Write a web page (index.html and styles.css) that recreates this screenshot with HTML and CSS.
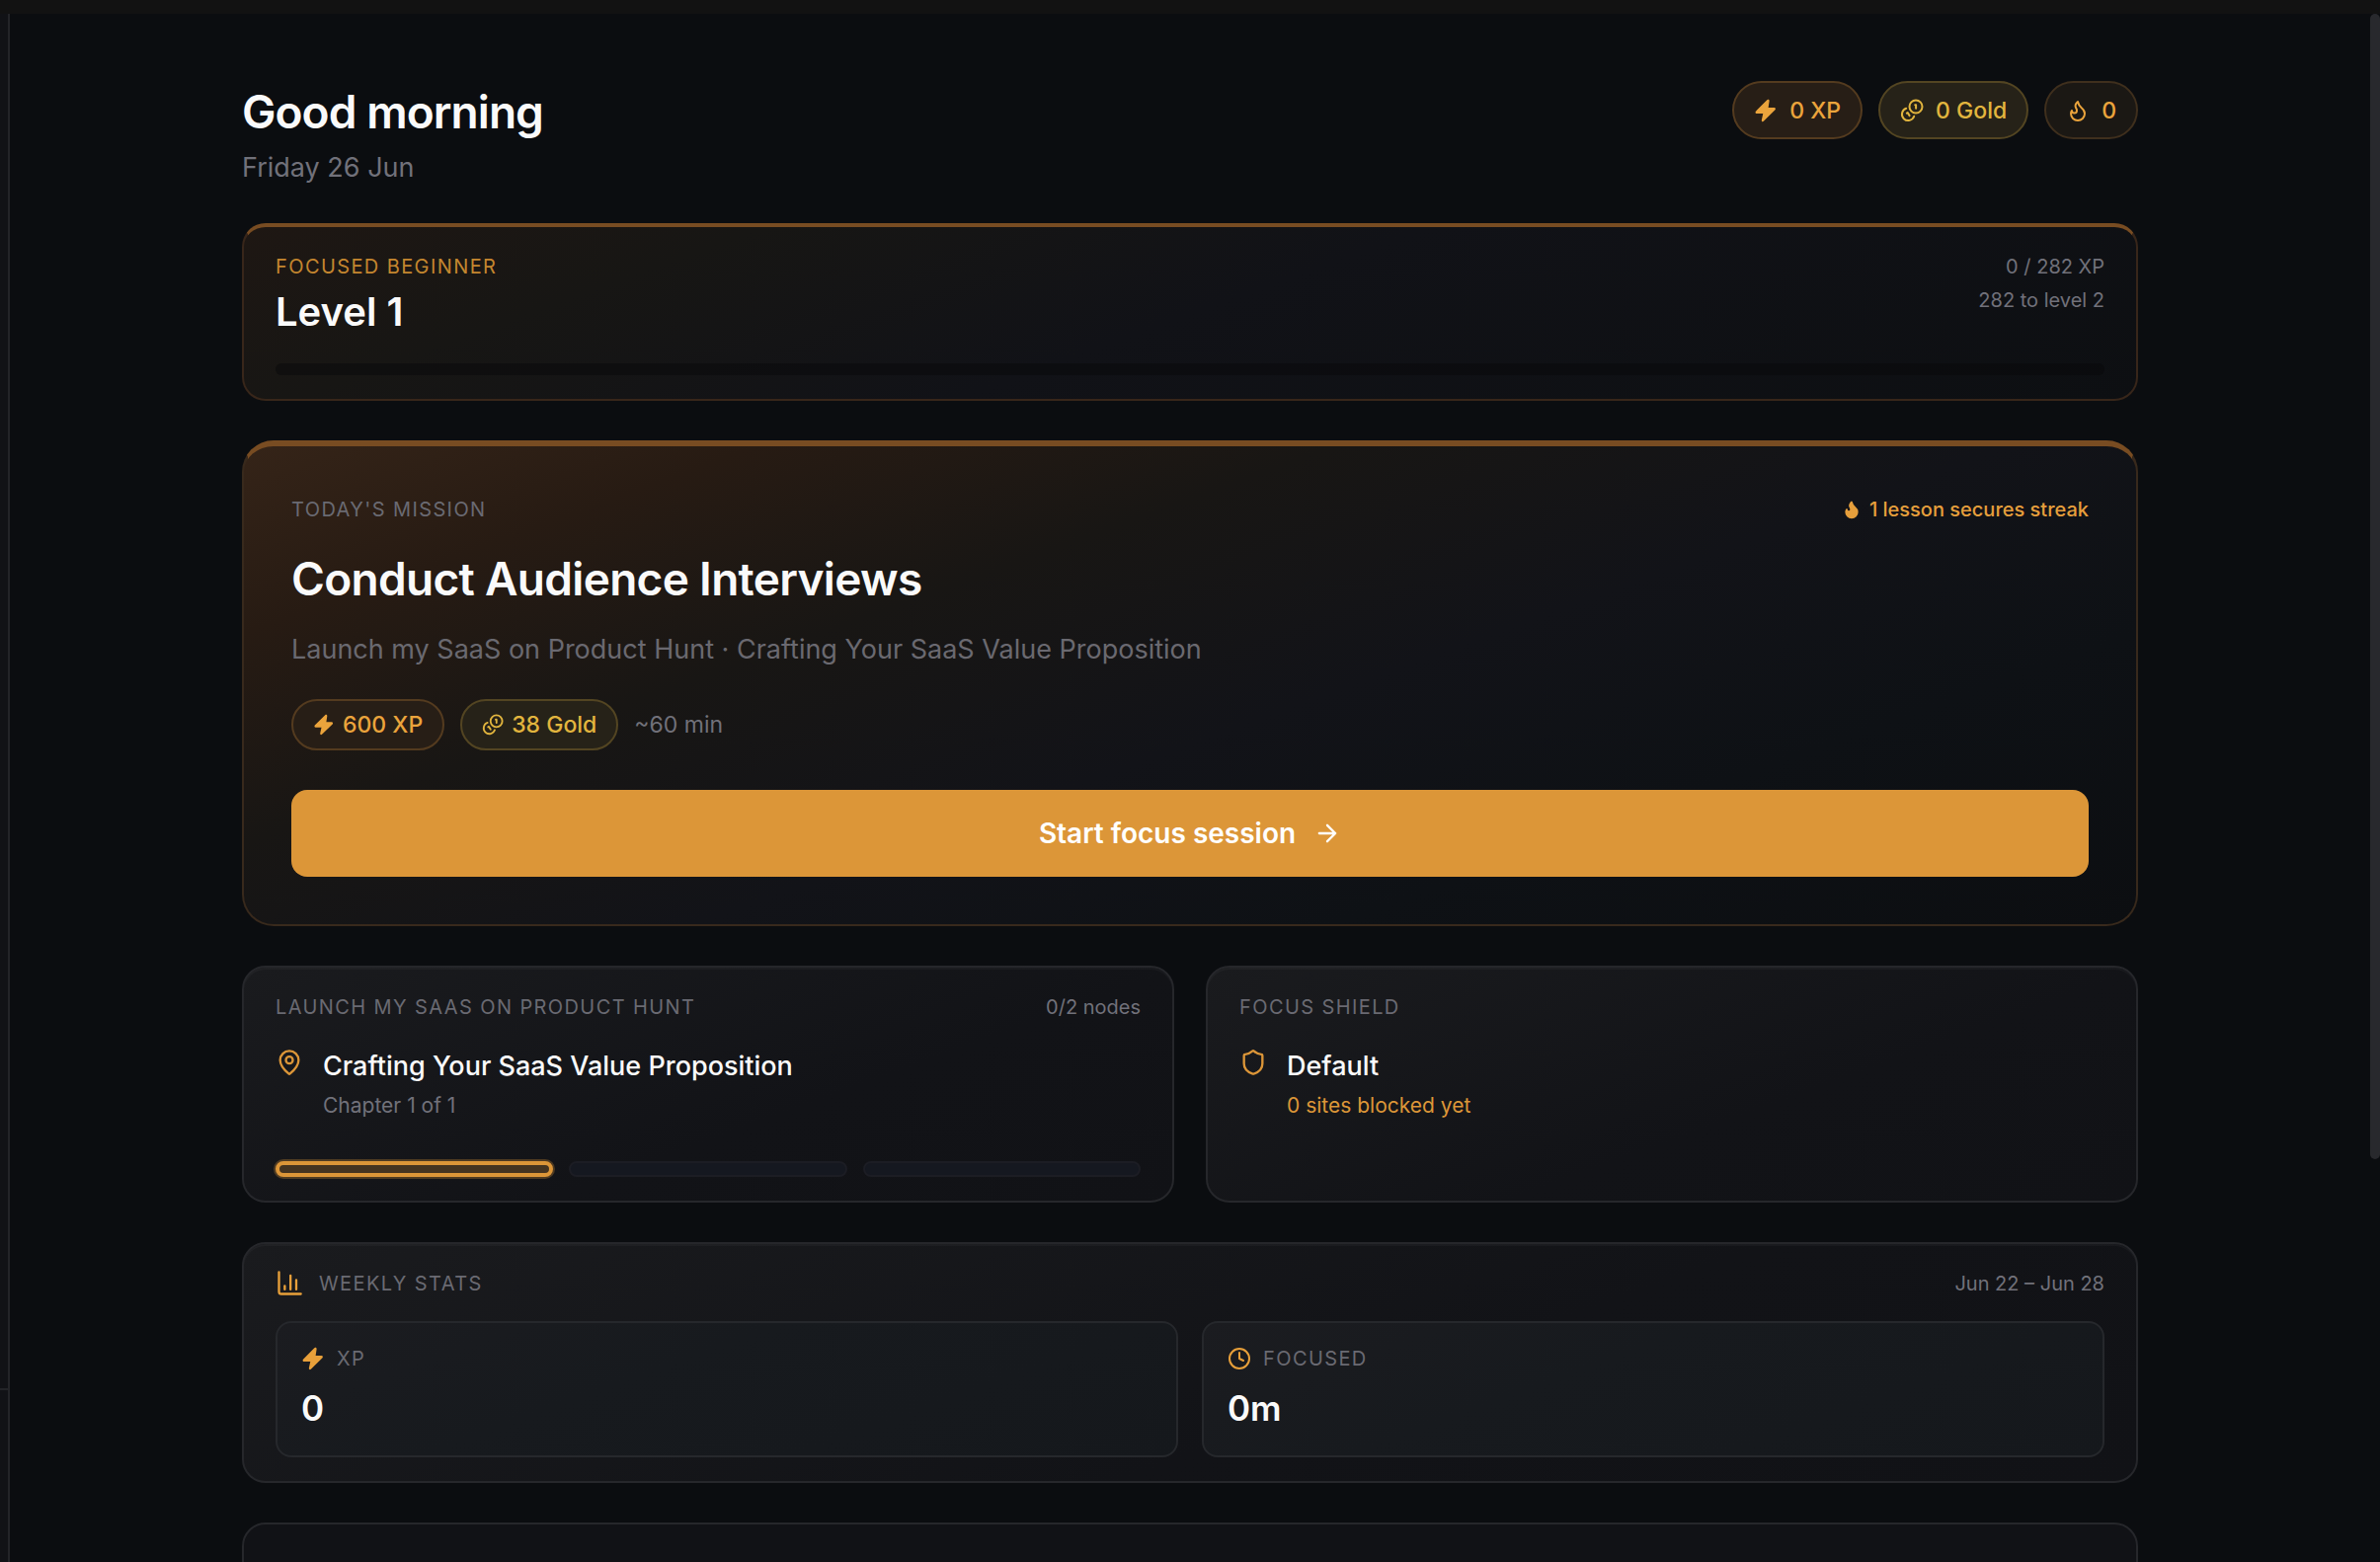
FILE: index.html
```html
<!DOCTYPE html>
<html lang="en">
<head>
<meta charset="UTF-8">
<meta name="viewport" content="width=device-width, initial-scale=1.0">
<title>Dashboard</title>
<link rel="stylesheet" href="styles.css">
</head>
<body>
<svg class="sprite" aria-hidden="true">
  <symbol id="zap" viewBox="1 1 22 22">
    <path d="M13.2 2.200 2.800 12.600c-.8.9-.3 2.200.9 2.200h5.800l-1.300 6c-.2 1.300 1 1.900 1.800 1l10.700-10.400c.8-.9.3-2.200-.9-2.200h-5.400l.9-6c.2-1.300-1.200-2-2.100-1z" fill="currentColor"/>
  </symbol>
  <symbol id="coins" viewBox="0 0 24 24" fill="none" stroke="currentColor" stroke-width="2" stroke-linecap="round" stroke-linejoin="round">
    <circle cx="16" cy="8" r="6.500"/>
    <path d="M15.200 6.300h.9v3.500"/>
    <path d="M6.200 9.800a6.300 6.300 0 1 0 8 8"/>
    <path d="m6.800 14.600.9-.5 1.900 3"/>
  </symbol>
  <symbol id="flame" viewBox="0 0 24 24">
    <path d="M8.500 14.500A2.500 2.500 0 0 0 11 12c0-1.380-.5-2-1-3-1.072-2.143-.224-4.054 2-6 .5 2.500 2 4.900 4 6.500 2 1.600 3 3.500 3 5.500a7 7 0 1 1-14 0c0-1.153.433-2.294 1-3a2.500 2.500 0 0 0 2.500 2.500z" fill="none" stroke="currentColor" stroke-width="2" stroke-linecap="round" stroke-linejoin="round"/>
  </symbol>
  <symbol id="flame-solid" viewBox="0 0 24 24">
    <path d="M8.500 14.500A2.500 2.500 0 0 0 11 12c0-1.380-.5-2-1-3-1.072-2.143-.224-4.054 2-6 .5 2.500 2 4.900 4 6.500 2 1.600 3 3.500 3 5.500a7 7 0 1 1-14 0c0-1.153.433-2.294 1-3a2.500 2.500 0 0 0 2.500 2.500z" fill="currentColor" stroke="currentColor" stroke-width="2" stroke-linejoin="round"/>
  </symbol>
  <symbol id="arrow" viewBox="0 0 24 24">
    <path d="M5 12h14M12 5l7 7-7 7" fill="none" stroke="currentColor" stroke-width="2" stroke-linecap="round" stroke-linejoin="round"/>
  </symbol>
  <symbol id="pin" viewBox="0 0 24 24" fill="none" stroke="currentColor" stroke-width="2" stroke-linecap="round" stroke-linejoin="round">
    <path d="M20 10c0 4.993-5.539 10.193-7.399 11.799a1 1 0 0 1-1.202 0C9.539 20.193 4 14.993 4 10a8 8 0 0 1 16 0"/>
    <circle cx="12" cy="10" r="3"/>
  </symbol>
  <symbol id="shield" viewBox="0 0 24 24">
    <path d="M20 13c0 5-3.500 7.500-7.660 8.950a1 1 0 0 1-.67-.01C7.500 20.500 4 18 4 13V6a1 1 0 0 1 1-1c2 0 4.500-1.200 6.240-2.720a1.170 1.170 0 0 1 1.520 0C14.510 3.810 17 5 19 5a1 1 0 0 1 1 1z" fill="none" stroke="currentColor" stroke-width="2" stroke-linecap="round" stroke-linejoin="round"/>
  </symbol>
  <symbol id="chart" viewBox="0 0 24 24">
    <path d="M3 2v17a2 2 0 0 0 2 2h17M8 17v-3M13 17V5M18 17V9" fill="none" stroke="currentColor" stroke-width="2" stroke-linecap="round" stroke-linejoin="round"/>
  </symbol>
  <symbol id="clock" viewBox="0 0 24 24">
    <path d="M12 6v6l4 2M22 12a10 10 0 1 1-20 0 10 10 0 0 1 20 0z" fill="none" stroke="currentColor" stroke-width="2" stroke-linecap="round" stroke-linejoin="round"/>
  </symbol>
</svg>

<div class="titlebar"></div>
<div class="app">
  <aside class="sidebar"><div class="sidebar-footer"></div></aside>
  <main class="main">
    <div class="content">
      <header class="header">
        <div>
          <h1>Good morning</h1>
          <p class="date">Friday 26 Jun</p>
        </div>
        <div class="pills">
          <span class="pill xp"><svg><use href="#zap"/></svg>0 XP</span>
          <span class="pill gold"><svg><use href="#coins"/></svg>0 Gold</span>
          <span class="pill streak"><svg><use href="#flame"/></svg>0</span>
        </div>
      </header>

      <section class="card level">
        <div class="row">
          <div>
            <p class="label accent">Focused Beginner</p>
            <h2>Level 1</h2>
          </div>
          <div class="level-info">
            <p>0 / 282 XP</p>
            <p>282 to level 2</p>
          </div>
        </div>
        <div class="progress"></div>
      </section>

      <section class="card mission">
        <div class="row">
          <p class="label">Today's Mission</p>
          <p class="secure"><svg><use href="#flame-solid"/></svg>1 lesson secures streak</p>
        </div>
        <h2 class="mission-title">Conduct Audience Interviews</h2>
        <p class="mission-path">Launch my SaaS on Product Hunt · Crafting Your SaaS Value Proposition</p>
        <div class="rewards">
          <span class="pill small xp"><svg><use href="#zap"/></svg>600 XP</span>
          <span class="pill small gold"><svg><use href="#coins"/></svg>38 Gold</span>
          <span class="time">~60 min</span>
        </div>
        <button class="start" type="button">Start focus session<svg><use href="#arrow"/></svg></button>
      </section>

      <div class="columns">
        <section class="card">
          <div class="row">
            <p class="label">Launch my SaaS on Product Hunt</p>
            <p class="note">0/2 nodes</p>
          </div>
          <div class="item">
            <svg><use href="#pin"/></svg>
            <div>
              <h3>Crafting Your SaaS Value Proposition</h3>
              <p class="sub">Chapter 1 of 1</p>
            </div>
          </div>
          <div class="segments">
            <span class="segment active"></span>
            <span class="segment"></span>
            <span class="segment"></span>
          </div>
        </section>
        <section class="card">
          <p class="label">Focus Shield</p>
          <div class="item">
            <svg><use href="#shield"/></svg>
            <div>
              <h3>Default</h3>
              <p class="sub warn">0 sites blocked yet</p>
            </div>
          </div>
        </section>
      </div>

      <section class="card">
        <div class="row">
          <p class="label with-icon"><svg><use href="#chart"/></svg>Weekly Stats</p>
          <p class="note">Jun 22 – Jun 28</p>
        </div>
        <div class="stats">
          <div class="stat">
            <p class="label"><svg><use href="#zap"/></svg>XP</p>
            <p class="value">0</p>
          </div>
          <div class="stat">
            <p class="label"><svg><use href="#clock"/></svg>Focused</p>
            <p class="value">0m</p>
          </div>
        </div>
      </section>

      <section class="card flat next"></section>
    </div>
  </main>
  <div class="scrollbar"><div class="thumb"></div></div>
</div>
</body>
</html>
```
FILE: styles.css
```css
* {
  box-sizing: border-box;
}
body {
  margin: 0;
  height: 100vh;
  display: flex;
  flex-direction: column;
  overflow: hidden;
  background-color: #0b0d10;
  color: #fafafa;
  font-family: Inter, "Liberation Sans", sans-serif;
  font-size: 20px;
  line-height: 32px;
}
h1, h2, h3, p {
  margin: 0;
}
svg {
  flex: none;
  width: 24px;
  height: 24px;
}
.sprite {
  display: none;
}
.titlebar {
  flex: none;
  height: 14px;
  background-color: #121212;
}
.app {
  flex: 1;
  min-height: 0;
  display: flex;
}
.sidebar {
  width: 10px;
  display: flex;
  flex-direction: column;
  justify-content: flex-end;
  background-color: #111216;
  border-right: 2px solid #232428;
}
.sidebar-footer {
  height: 176px;
  border-top: 2px solid #232428;
}
.main {
  flex: 1;
  overflow: hidden;
}
.content {
  max-width: 1920px;
  margin: 0 auto;
  padding: 68px 0;
  display: flex;
  flex-direction: column;
  gap: 40px;
}
.scrollbar {
  width: 10px;
}
.thumb {
  height: 74%;
  border-radius: 5px;
  background-color: #28292d;
}

/* Header */
.header {
  display: flex;
  justify-content: space-between;
  align-items: flex-start;
}
h1 {
  font-size: 46px;
  line-height: 62px;
  font-weight: 600;
  letter-spacing: -0.02em;
}
.date {
  margin-top: 10px;
  font-size: 27px;
  line-height: 32px;
  color: #71717a;
}
.pills {
  display: flex;
  gap: 16px;
}
.pill {
  display: inline-flex;
  align-items: center;
  gap: 12px;
  height: 59px;
  padding: 0 20px;
  border: 2px solid;
  border-radius: 30px;
  font-size: 23px;
  font-weight: 500;
}
.pill.small {
  height: 52px;
  padding: 0 20px;
  gap: 8px;
}
.pill.small svg {
  width: 22px;
  height: 22px;
}
.xp {
  color: #eba43c;
  background-color: #271e16;
  border-color: #543b1f;
}
.gold {
  color: #e2b53e;
  background-color: #262218;
  border-color: #534522;
}
.streak {
  color: #eba43c;
  background-color: #1b1814;
  border-color: #3f2f1d;
}

/* Cards */
.card {
  padding: 24px 32px;
  border: 2px solid #26272b;
  border-radius: 24px;
  background: linear-gradient(160deg, #1a1b1e 0%, #121317 60%, #111216 100%);
  box-shadow: inset 0 2px 0 rgba(255, 255, 255, 0.03);
}
.flat {
  background: #111216;
  box-shadow: none;
}
.next {
  height: 200px;
}
.row {
  display: flex;
  justify-content: space-between;
}
.label {
  text-transform: uppercase;
  letter-spacing: 0.07em;
  color: #6a6a72;
}
.accent {
  color: #c4862f;
}
.note {
  color: #71717a;
}

.level {
  border-color: #38261a;
  border-top: 4px solid #784c22;
  background: linear-gradient(160deg, #1e1713 0%, #171614 22%, #111217 50%, #0d0f12 100%);
  box-shadow: none;
}
.level h2 {
  margin-top: 6px;
  font-size: 40px;
  line-height: 48px;
  font-weight: 600;
}
.level-info {
  text-align: right;
  color: #71717a;
}
.level-info p + p {
  margin-top: 2px;
}
.progress {
  height: 12px;
  margin-top: 28px;
  border-radius: 6px;
  background-color: rgba(8, 8, 10, 0.5);
}

/* Mission */
.mission {
  padding: 48px;
  border-color: #38291c;
  border-top: 6px solid #784c22;
  border-radius: 32px;
  background: linear-gradient(160deg, #352418 0%, #271b13 16%, #181614 34%, #121318 55%, #0e1115 75%, #0c0e11 100%);
  box-shadow: none;
}
.secure {
  display: flex;
  align-items: center;
  gap: 8px;
  font-weight: 500;
  color: #e69f3c;
}
.secure svg {
  width: 20px;
  height: 20px;
}
.mission-title {
  margin-top: 24px;
  font-size: 46px;
  line-height: 60px;
  font-weight: 600;
  letter-spacing: -0.015em;
}
.mission-path {
  margin-top: 24px;
  font-size: 27px;
  line-height: 36px;
  color: #6a6970;
}
.rewards {
  display: flex;
  align-items: center;
  gap: 16px;
  margin-top: 32px;
}
.time {
  font-size: 23px;
  color: #71717a;
}
.start {
  display: flex;
  justify-content: center;
  align-items: center;
  gap: 18px;
  width: 100%;
  height: 88px;
  margin-top: 40px;
  border: none;
  border-radius: 16px;
  background-color: #dc9638;
  color: #fff;
  font-family: inherit;
  font-size: 28px;
  font-weight: 600;
  cursor: pointer;
}
.start svg {
  width: 28px;
  height: 28px;
}

/* Roadmap and shield */
.columns {
  display: grid;
  grid-template-columns: 1fr 1fr;
  gap: 32px;
}
.item {
  display: flex;
  gap: 20px;
  margin-top: 24px;
}
.item svg {
  width: 28px;
  height: 28px;
  margin-top: 2px;
  color: #dc9638;
}
h3 {
  font-size: 27px;
  line-height: 40px;
  font-weight: 500;
}
.sub {
  margin-top: 4px;
  font-size: 21px;
  line-height: 32px;
  color: #71717a;
}
.warn {
  color: #dc9638;
}
.segments {
  display: grid;
  grid-template-columns: repeat(3, 1fr);
  gap: 16px;
  margin-top: 40px;
}
.segment {
  height: 16px;
  border: 2px solid #1c1d24;
  border-radius: 8px;
  background-color: #151820;
}
.segment.active {
  border: 4px solid #dc9638;
  background-color: #453420;
  box-shadow: 0 0 0 2px rgba(220, 150, 56, 0.3);
}

/* Stats */
.label svg {
  color: #e8a03a;
}
.with-icon {
  display: flex;
  align-items: center;
  gap: 16px;
}
.with-icon svg {
  width: 28px;
  height: 28px;
}
.stats {
  display: grid;
  grid-template-columns: 1fr 1fr;
  gap: 24px;
  margin-top: 22px;
}
.stat {
  padding: 20px 24px 26px;
  border: 2px solid #26282c;
  border-radius: 16px;
  background: linear-gradient(160deg, #1b1c20 0%, #171a1e 40%, #15181c 100%);
}
.stat .label {
  display: flex;
  align-items: center;
  gap: 12px;
}
.value {
  margin-top: 12px;
  font-size: 35px;
  line-height: 44px;
  font-weight: 600;
}
```
